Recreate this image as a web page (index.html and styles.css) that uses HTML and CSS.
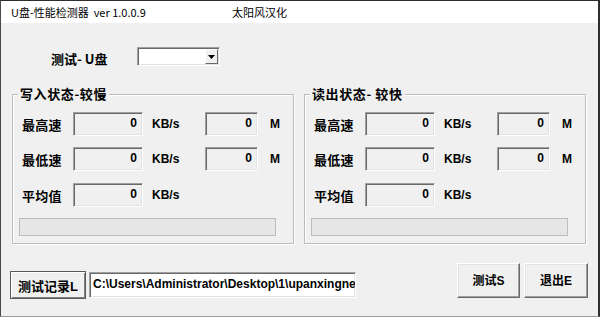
FILE: index.html
```html
<!DOCTYPE html>
<html lang="zh">
<head>
<meta charset="utf-8">
<title>U盘-性能检测器</title>
<link rel="stylesheet" href="styles.css">
</head>
<body>
<div class="window">
  <div class="titlebar">
    <span class="title-main">U盘-性能检测器&nbsp;&nbsp;ver 1.0.0.9</span>
    <span class="title-credit">太阳风汉化</span>
  </div>
  <div class="client">
    <div class="drive-row">
      <span class="drive-label">测试- U盘</span>
      <div class="combo">
        <div class="combo-field"></div>
        <div class="combo-btn">
          <svg width="7" height="4" viewBox="0 0 7 4"><path d="M0 0H7L3.5 4Z" fill="#000"/></svg>
        </div>
      </div>
    </div>

    <div class="groups">
      <div class="group">
        <div class="group-title">写入状态-较慢</div>
        <div class="row">
          <span class="lbl">最高速</span>
          <div class="field wide">0</div>
          <span class="unit">KB/s</span>
          <div class="field narrow">0</div>
          <span class="unit-m">M</span>
        </div>
        <div class="row row2">
          <span class="lbl">最低速</span>
          <div class="field wide">0</div>
          <span class="unit">KB/s</span>
          <div class="field narrow">0</div>
          <span class="unit-m">M</span>
        </div>
        <div class="row row3">
          <span class="lbl">平均值</span>
          <div class="field wide">0</div>
          <span class="unit">KB/s</span>
        </div>
        <div class="progress"></div>
      </div>

      <div class="group">
        <div class="group-title">读出状态- 较快</div>
        <div class="row">
          <span class="lbl">最高速</span>
          <div class="field wide">0</div>
          <span class="unit">KB/s</span>
          <div class="field narrow">0</div>
          <span class="unit-m">M</span>
        </div>
        <div class="row row2">
          <span class="lbl">最低速</span>
          <div class="field wide">0</div>
          <span class="unit">KB/s</span>
          <div class="field narrow">0</div>
          <span class="unit-m">M</span>
        </div>
        <div class="row row3">
          <span class="lbl">平均值</span>
          <div class="field wide">0</div>
          <span class="unit">KB/s</span>
        </div>
        <div class="progress"></div>
      </div>
    </div>

    <div class="bottom">
      <div class="btn btn-log">测试记录L</div>
      <div class="path">C:\Users\Administrator\Desktop\1\upanxingne</div>
      <div class="spacer"></div>
      <div class="btn btn-big">测试S</div>
      <div class="btn btn-big btn-exit">退出E</div>
    </div>
  </div>
</div>
</body>
</html>
```

FILE: styles.css
```css
* { box-sizing: border-box; }

html, body {
  margin: 0;
  padding: 0;
  background: #f0f0f0;
}

.window {
  width: 600px;
  height: 317px;
  border-top: 1px solid #2e2e2e;
  border-left: 1px solid #4a4a4a;
  border-right: 2px solid #2e2e2e;
  border-bottom: 1px solid #9a9a9a;
  background: #f0f0f0;
  display: flex;
  flex-direction: column;
  overflow: hidden;
}

.titlebar {
  height: 22px;
  background: #fff;
  display: flex;
  align-items: center;
  font-family: "Noto Sans CJK SC", "Liberation Sans", sans-serif;
  font-size: 11px;
  color: #000;
  padding-left: 10px;
  flex-shrink: 0;
}

.title-main {
  width: 221px;
  white-space: pre;
}

.client {
  flex: 1;
  display: flex;
  flex-direction: column;
  padding-left: 11px;
}

.drive-row {
  display: flex;
  align-items: center;
  margin-top: 24px;
  height: 19px;
  padding-left: 39px;
}

.drive-label {
  font-family: "Noto Sans CJK SC", sans-serif;
  font-weight: 700;
  font-size: 13px;
  width: 86px;
  margin-top: 3px;
}

.combo {
  width: 83px;
  height: 19px;
  display: flex;
  background: #fff;
  border: 1px solid;
  border-color: #a0a0a0 #fff #fff #a0a0a0;
  box-shadow: inset 1px 1px 0 #696969, inset -1px -1px 0 #e3e3e3;
  padding: 2px;
}

.combo-field {
  flex: 1;
}

.combo-btn {
  width: 13px;
  background: #f0f0f0;
  border: 1px solid;
  border-color: #fff #696969 #696969 #fff;
  display: flex;
  align-items: center;
  justify-content: center;
  margin: -1px -1px -1px 0;
}

.groups {
  display: flex;
  gap: 10px;
  margin-top: 28px;
}

.group {
  width: 282px;
  height: 150px;
  border: 1px solid #bcbcbc;
  box-shadow: inset 1px 1px 0 #fff, 1px 1px 0 #fff;
  display: flex;
  flex-direction: column;
}

.group-title {
  align-self: flex-start;
  margin-top: -9px;
  margin-left: 5px;
  padding: 0 2px;
  height: 16px;
  line-height: 16px;
  background: #f0f0f0;
  font-family: "Noto Sans CJK SC", sans-serif;
  font-weight: 700;
  font-size: 13px;
  letter-spacing: 0.6px;
  color: #000;
}

.row {
  display: flex;
  align-items: center;
  height: 24px;
  margin-top: 10px;
  padding-left: 9px;
}

.row2 { margin-top: 11px; }
.row3 { margin-top: 12px; }

.lbl {
  width: 51px;
  font-family: "Noto Sans CJK SC", sans-serif;
  font-weight: 700;
  font-size: 13px;
  letter-spacing: 0.3px;
  color: #000;
}

.field {
  height: 24px;
  background: #f0f0f0;
  border: 1px solid;
  border-color: #a0a0a0 #fff #fff #a0a0a0;
  box-shadow: inset 1px 1px 0 #696969, inset -1px -1px 0 #e3e3e3;
  text-align: right;
  padding: 3px 5px 0 0;
  font-family: "Liberation Sans", sans-serif;
  font-weight: 700;
  font-size: 12px;
  line-height: 14px;
  color: #000;
}

.wide { width: 70px; }
.narrow { width: 53px; }

.unit {
  width: 62px;
  padding-left: 9px;
  font-family: "Liberation Sans", sans-serif;
  font-weight: 700;
  font-size: 12px;
  color: #000;
}

.unit-m {
  padding-left: 12px;
  font-family: "Liberation Sans", sans-serif;
  font-weight: 700;
  font-size: 12px;
  color: #000;
}

.progress {
  margin-top: 11px;
  margin-left: 6px;
  width: 257px;
  height: 18px;
  border: 1px solid #bcbcbc;
  background: #e6e6e6;
}

.bottom {
  display: flex;
  align-items: flex-end;
  margin-top: 19px;
  margin-left: -2px;
  height: 35px;
}

.btn {
  background: #f0f0f0;
  border: 1px solid;
  border-color: #fff #696969 #696969 #fff;
  box-shadow: inset -1px -1px 0 #a0a0a0, inset 1px 1px 0 #e3e3e3;
  display: flex;
  align-items: center;
  justify-content: center;
  font-family: "Liberation Sans", "Noto Sans CJK SC", sans-serif;
  font-weight: 700;
  font-size: 12px;
  color: #000;
}

.btn-log {
  width: 76px;
  height: 28px;
  margin-bottom: -1px;
  border-color: #5a5a5a;
  box-shadow: inset 1px 1px 0 #fff, inset -1px -1px 0 #808080;
  font-size: 13px;
}

.path {
  margin-left: 3px;
  width: 267px;
  height: 26px;
  background: #fff;
  border: 1px solid;
  border-color: #a0a0a0 #fff #fff #a0a0a0;
  box-shadow: inset 1px 1px 0 #696969, inset -1px -1px 0 #e3e3e3;
  padding: 4px 0 0 3px;
  font-family: "Liberation Sans", sans-serif;
  font-weight: 700;
  font-size: 12px;
  line-height: 14px;
  white-space: nowrap;
  overflow: hidden;
  color: #000;
}

.spacer { flex: 1; }

.btn-big {
  width: 63px;
  height: 35px;
  padding-bottom: 3px;
}

.btn-exit {
  margin-left: 4px;
  width: 64px;
  margin-right: 10px;
}
```
